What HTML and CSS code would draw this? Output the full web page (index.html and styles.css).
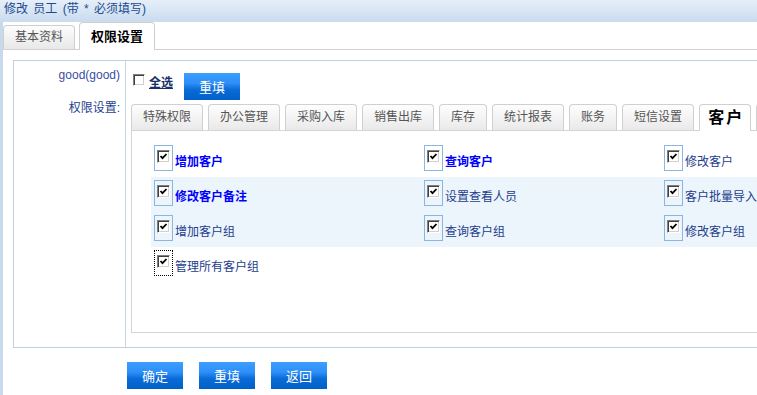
FILE: index.html
```html
<!DOCTYPE html>
<html lang="zh-CN">

<head>
    <meta charset="UTF-8">
    <title>修改 员工</title>
    <link rel="stylesheet" href="styles.css">
</head>

<body>
    <div class="title-bar">修改 员工 (带 * 必须填写)</div>

    <div class="page">
        <ul class="main-tabs">
            <li class="main-tab">基本资料</li>
            <li class="main-tab active">权限设置</li>
        </ul>

        <div class="perm-form">
            <div class="label-cell user-name">good(good)</div>
            <div class="value-cell toolbar">
                <label class="select-all">
                    <span class="cb"></span>
                    <span class="select-all-text">全选</span>
                </label>
                <button class="btn btn-reset-top">重填</button>
            </div>

            <div class="label-cell perm-label">权限设置:</div>
            <div class="value-cell perm-cell">
                <ul class="sub-tabs">
                    <li class="sub-tab">特殊权限</li>
                    <li class="sub-tab">办公管理</li>
                    <li class="sub-tab">采购入库</li>
                    <li class="sub-tab">销售出库</li>
                    <li class="sub-tab">库存</li>
                    <li class="sub-tab">统计报表</li>
                    <li class="sub-tab">账务</li>
                    <li class="sub-tab">短信设置</li>
                    <li class="sub-tab active">客户</li>
                    <li class="sub-tab sub-tab-more"></li>
                </ul>

                <div class="tab-panel">
                    <table class="perm-table">
                        <tr>
                            <td class="col-1">
                                <div class="perm-item">
                                    <span class="cb-wrap"><span class="cb checked"><svg viewBox="0 0 9 9" width="9" height="9"><polyline points="1.5,4 3.5,6.2 7.5,2" fill="none" stroke="#000" stroke-width="1.8"/></svg></span></span>
                                    <span class="perm-text strong">增加客户</span>
                                </div>
                            </td>
                            <td class="col-2">
                                <div class="perm-item">
                                    <span class="cb-wrap"><span class="cb checked"><svg viewBox="0 0 9 9" width="9" height="9"><polyline points="1.5,4 3.5,6.2 7.5,2" fill="none" stroke="#000" stroke-width="1.8"/></svg></span></span>
                                    <span class="perm-text strong">查询客户</span>
                                </div>
                            </td>
                            <td>
                                <div class="perm-item">
                                    <span class="cb-wrap"><span class="cb checked"><svg viewBox="0 0 9 9" width="9" height="9"><polyline points="1.5,4 3.5,6.2 7.5,2" fill="none" stroke="#000" stroke-width="1.8"/></svg></span></span>
                                    <span class="perm-text">修改客户</span>
                                </div>
                            </td>
                        </tr>
                        <tr class="shaded">
                            <td>
                                <div class="perm-item">
                                    <span class="cb-wrap"><span class="cb checked"><svg viewBox="0 0 9 9" width="9" height="9"><polyline points="1.5,4 3.5,6.2 7.5,2" fill="none" stroke="#000" stroke-width="1.8"/></svg></span></span>
                                    <span class="perm-text strong">修改客户备注</span>
                                </div>
                            </td>
                            <td>
                                <div class="perm-item">
                                    <span class="cb-wrap"><span class="cb checked"><svg viewBox="0 0 9 9" width="9" height="9"><polyline points="1.5,4 3.5,6.2 7.5,2" fill="none" stroke="#000" stroke-width="1.8"/></svg></span></span>
                                    <span class="perm-text">设置查看人员</span>
                                </div>
                            </td>
                            <td>
                                <div class="perm-item">
                                    <span class="cb-wrap"><span class="cb checked"><svg viewBox="0 0 9 9" width="9" height="9"><polyline points="1.5,4 3.5,6.2 7.5,2" fill="none" stroke="#000" stroke-width="1.8"/></svg></span></span>
                                    <span class="perm-text">客户批量导入</span>
                                </div>
                            </td>
                        </tr>
                        <tr class="shaded">
                            <td>
                                <div class="perm-item">
                                    <span class="cb-wrap"><span class="cb checked"><svg viewBox="0 0 9 9" width="9" height="9"><polyline points="1.5,4 3.5,6.2 7.5,2" fill="none" stroke="#000" stroke-width="1.8"/></svg></span></span>
                                    <span class="perm-text">增加客户组</span>
                                </div>
                            </td>
                            <td>
                                <div class="perm-item">
                                    <span class="cb-wrap"><span class="cb checked"><svg viewBox="0 0 9 9" width="9" height="9"><polyline points="1.5,4 3.5,6.2 7.5,2" fill="none" stroke="#000" stroke-width="1.8"/></svg></span></span>
                                    <span class="perm-text">查询客户组</span>
                                </div>
                            </td>
                            <td>
                                <div class="perm-item">
                                    <span class="cb-wrap"><span class="cb checked"><svg viewBox="0 0 9 9" width="9" height="9"><polyline points="1.5,4 3.5,6.2 7.5,2" fill="none" stroke="#000" stroke-width="1.8"/></svg></span></span>
                                    <span class="perm-text">修改客户组</span>
                                </div>
                            </td>
                        </tr>
                        <tr>
                            <td>
                                <div class="perm-item">
                                    <span class="cb-wrap focused"><span class="cb checked"><svg viewBox="0 0 9 9" width="9" height="9"><polyline points="1.5,4 3.5,6.2 7.5,2" fill="none" stroke="#000" stroke-width="1.8"/></svg></span></span>
                                    <span class="perm-text">管理所有客户组</span>
                                </div>
                            </td>
                            <td></td>
                            <td></td>
                        </tr>
                    </table>
                </div>
            </div>
        </div>

        <div class="actions">
            <button class="btn">确定</button>
            <button class="btn">重填</button>
            <button class="btn">返回</button>
        </div>
    </div>
</body>

</html>
```

FILE: styles.css
```css
html,
body {
    margin: 0;
    padding: 0;
    overflow: hidden;
    background: #fff;
    font-family: "Liberation Sans", "Noto Sans CJK SC", sans-serif;
    font-size: 12px;
}

ul {
    margin: 0;
    padding: 0;
    list-style: none;
}

.title-bar {
    height: 22px;
    box-sizing: border-box;
    padding: 1px 4px 0 4px;
    line-height: 16px;
    word-spacing: 2px;
    color: #214a8e;
    background: linear-gradient(to bottom, #e6eff9, #c9dbef);
    white-space: nowrap;
}

.page {
    border-left: 3px solid #c8d9ec;
    height: 373px;
}

/* top tabs */
.main-tabs {
    display: flex;
    align-items: flex-end;
    gap: 4px;
    height: 27px;
    border-bottom: 1px solid #d2d2d2;
}

.main-tab {
    height: 24px;
    box-sizing: border-box;
    padding: 0 11px;
    line-height: 22px;
    color: #555;
    border: 1px solid #cfcfcf;
    border-bottom: none;
    border-radius: 4px 4px 0 0;
    background: linear-gradient(to bottom, #fdfdfd, #e8e8e8);
}

.main-tab.active {
    height: 28px;
    margin-bottom: -1px;
    line-height: 27px;
    font-size: 13px;
    font-weight: bold;
    color: #000;
    background: #fff;
}

/* form table */
.perm-form {
    display: grid;
    grid-template-columns: 112px 900px;
    grid-template-rows: 39px auto;
    margin: 10px 0 0 10px;
    border: 1px solid #bdd0e4;
    width: max-content;
}

.label-cell {
    box-sizing: border-box;
    border-right: 1px solid #c9d6e3;
    padding-right: 5px;
    text-align: right;
    color: #2c45a0;
    line-height: 14px;
}

.user-name {
    padding-top: 7px;
    color: #3a4ea6;
}

.perm-label {
    padding-top: 1px;
    color: #1f3f8f;
}

.toolbar {
    display: flex;
    align-items: flex-start;
    padding: 12px 0 0 7px;
}

.select-all {
    display: flex;
    align-items: flex-start;
}

.select-all .cb {
    width: 12px;
    height: 12px;
    margin-top: 1px;
}

.select-all-text {
    margin: 3px 0 0 4px;
    line-height: 14px;
    font-weight: bold;
    color: #1a2f68;
    text-decoration: underline;
}

.btn-reset-top {
    margin-left: 11px;
}

.btn {
    width: 56px;
    height: 27px;
    padding: 0;
    border: none;
    color: #fff;
    font-family: "Liberation Sans", "Noto Sans CJK SC", sans-serif;
    font-size: 13px;
    background: linear-gradient(to bottom, #3c9eff 0%, #2d8ff8 38%, #0a6ad7 62%, #0061c8 100%);
    cursor: pointer;
}

.perm-cell {
    padding: 0 0 14px 5px;
}

/* permission tabs */
.sub-tabs {
    display: flex;
    align-items: flex-end;
    gap: 5px;
    margin-top: 4px;
    height: 26px;
    border-bottom: 1px solid #d4d4d4;
}

.sub-tab {
    height: 26px;
    box-sizing: border-box;
    padding: 0 11px;
    line-height: 24px;
    color: #555;
    border: 1px solid #d0d0d0;
    border-bottom: none;
    border-radius: 4px 4px 0 0;
    background: linear-gradient(to bottom, #fefefe, #e9e9e9);
    white-space: nowrap;
}

.sub-tab.active {
    height: 27px;
    margin-bottom: -1px;
    padding: 0 6px 0 8px;
    line-height: 26px;
    font-size: 16px;
    font-weight: bold;
    letter-spacing: 2px;
    color: #000;
    background: #fff;
}

.sub-tab-more {
    width: 60px;
}

.tab-panel {
    height: 202px;
    box-sizing: border-box;
    padding: 11px 0 0 19px;
    border-left: 1px solid #d4d4d4;
    border-bottom: 1px solid #d4d4d4;
}

.perm-table {
    border-collapse: collapse;
    width: 780px;
}

.perm-table td {
    height: 35px;
    box-sizing: border-box;
    padding: 3px 0 0 3px;
    vertical-align: top;
}

.perm-table .col-1 {
    width: 270px;
}

.perm-table .col-2 {
    width: 240px;
}

.perm-table tr.shaded td {
    background: #edf5fc;
}

.perm-item {
    display: flex;
    align-items: flex-start;
}

.cb-wrap {
    width: 19px;
    height: 26px;
    box-sizing: border-box;
    padding: 4px 0 0 2px;
    border: 1px solid #8cb5e2;
}

.cb-wrap.focused {
    border: 1px dotted #000;
}

.cb {
    display: flex;
    align-items: center;
    justify-content: center;
    width: 13px;
    height: 13px;
    box-sizing: border-box;
    border: 1px solid;
    border-color: #808080 #fff #fff #808080;
    box-shadow: inset 1px 1px #404040, inset -1px -1px #d4d0c8;
    background: #fff;
}

.perm-text {
    margin: 10px 0 0 2px;
    line-height: 14px;
    color: #1d3d8d;
    white-space: nowrap;
}

.perm-text.strong {
    color: #0000ff;
    font-weight: bold;
}

/* bottom buttons */
.actions {
    display: flex;
    gap: 16px;
    margin-top: 14px;
    padding-left: 124px;
}
```
